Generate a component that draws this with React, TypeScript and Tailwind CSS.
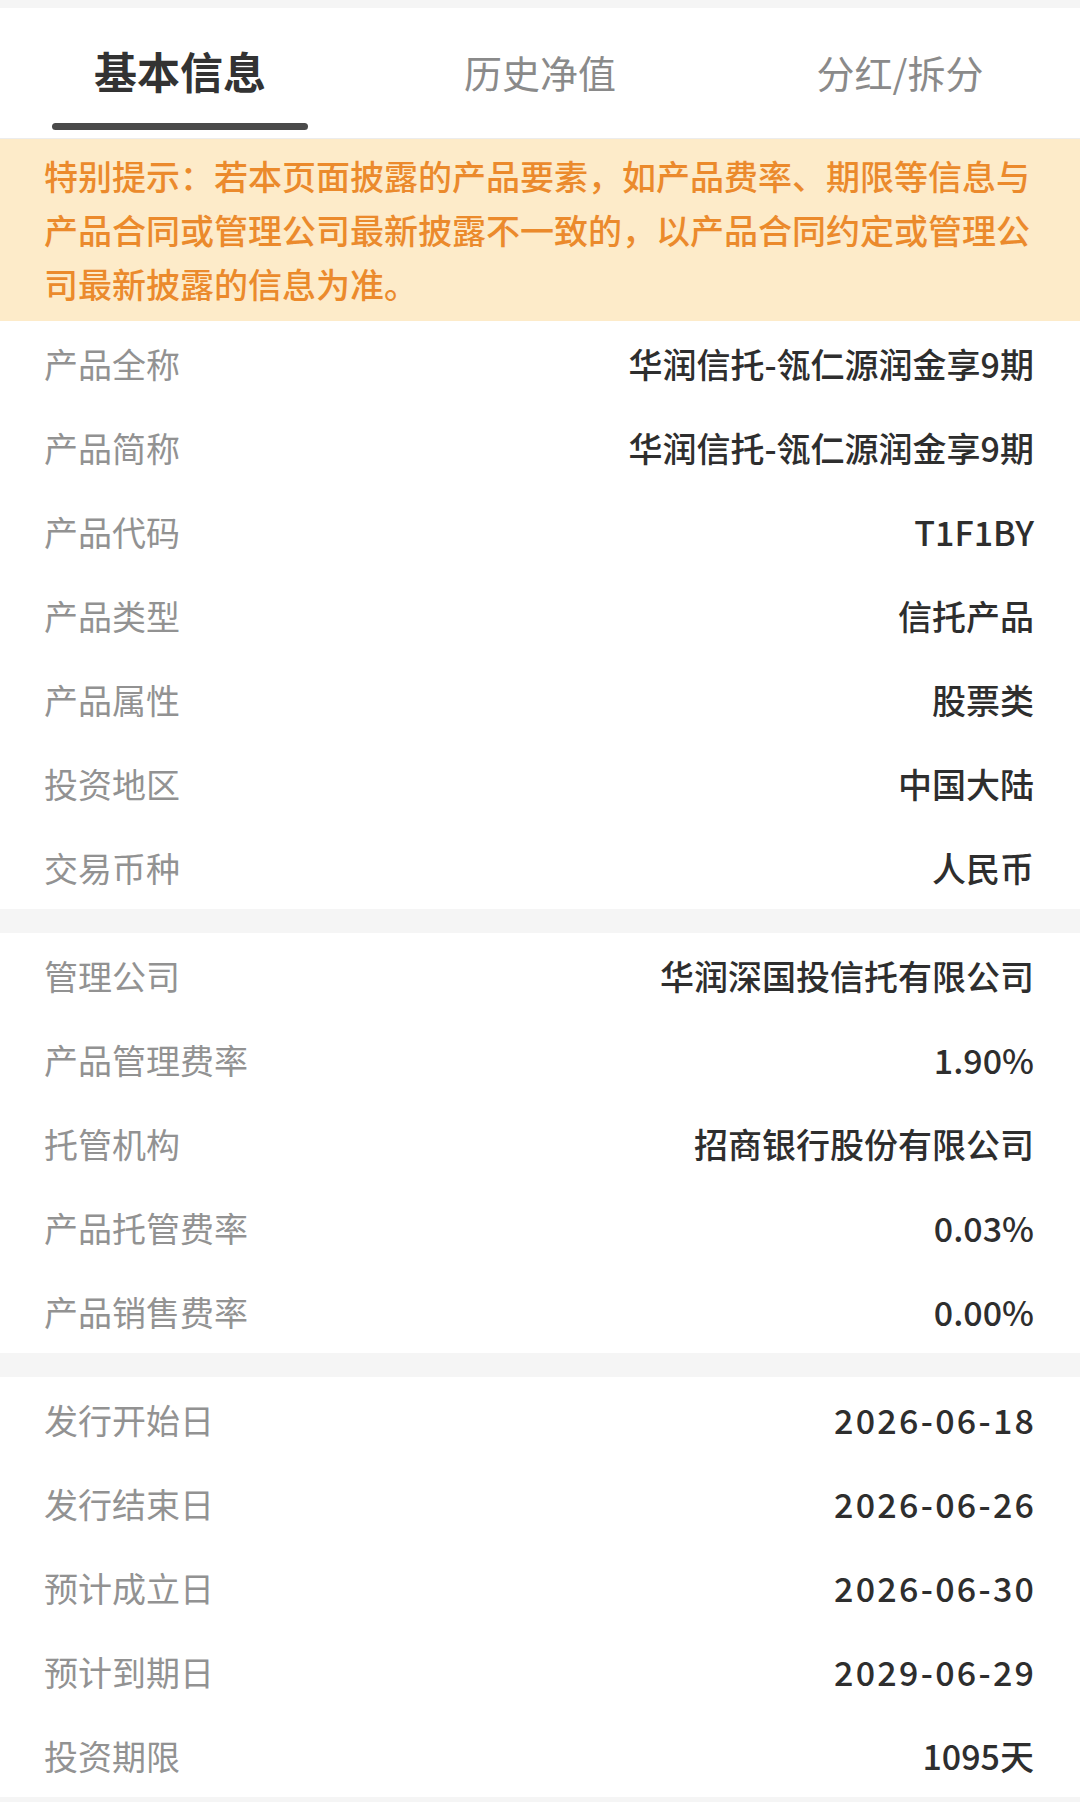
import React from "react";

const font = { fontFamily: '"Noto Sans CJK SC", "Noto Sans", sans-serif' };

type Row = [string, string];

const sec1: Row[] = [
  ["产品全称", "华润信托-瓴仁源润金享9期"],
  ["产品简称", "华润信托-瓴仁源润金享9期"],
  ["产品代码", "T1F1BY"],
  ["产品类型", "信托产品"],
  ["产品属性", "股票类"],
  ["投资地区", "中国大陆"],
  ["交易币种", "人民币"],
];
const sec2: Row[] = [
  ["管理公司", "华润深国投信托有限公司"],
  ["产品管理费率", "1.90%"],
  ["托管机构", "招商银行股份有限公司"],
  ["产品托管费率", "0.03%"],
  ["产品销售费率", "0.00%"],
];
const sec3: Row[] = [
  ["发行开始日", "2026-06-18"],
  ["发行结束日", "2026-06-26"],
  ["预计成立日", "2026-06-30"],
  ["预计到期日", "2029-06-29"],
  ["投资期限", "1095天"],
];

function Section({ rows }: { rows: Row[] }) {
  return (
    <div className="bg-white">
      {rows.map(([k, v], i) => {
        const isDate = /^\d{4}-\d{2}-\d{2}$/.test(v);
        return (
          <div key={i} className="flex h-[84px] items-center justify-between pl-[44px] pr-[46px]">
            <span className="text-[34px] text-[#929292]">{k}</span>
            <span
              className={
                isDate
                  ? "text-[34px] font-medium tracking-[2.3px] -mr-[2.3px] text-[#2e2e2e]"
                  : "text-[34px] font-medium text-[#2e2e2e]"
              }
            >
              {v}
            </span>
          </div>
        );
      })}
    </div>
  );
}

export default function App() {
  return (
    <div style={font} className="w-[1080px] min-h-[1802px] bg-[#f5f5f5]">
      <div className="h-[8px] bg-[#f5f5f5]" />
      <div className="flex h-[131px] bg-white border-b border-[#ececec]">
        <div className="relative flex flex-1 items-center justify-center pb-[6px]">
          <span className="text-[43px] font-bold text-[#333333]">基本信息</span>
          <div className="absolute bottom-[8px] left-1/2 h-[7px] w-[256px] -translate-x-1/2 rounded-full bg-[#4a4a4a]" />
        </div>
        <div className="flex flex-1 items-center justify-center pb-[4px]">
          <span className="text-[38px] text-[#8a8a8a]">历史净值</span>
        </div>
        <div className="flex flex-1 items-center justify-center pb-[4px]">
          <span className="text-[38px] text-[#8a8a8a]">分红/拆分</span>
        </div>
      </div>
      <div className="bg-[#fdebc9] pl-[44px] pr-[30px] py-[10px] text-[34px] font-medium leading-[54px] text-[#eb8a2c]">
        特别提示：若本页面披露的产品要素，如产品费率、期限等信息与产品合同或管理公司最新披露不一致的，以产品合同约定或管理公司最新披露的信息为准。
      </div>
      <Section rows={sec1} />
      <div className="h-[24px]" />
      <Section rows={sec2} />
      <div className="h-[24px]" />
      <Section rows={sec3} />
    </div>
  );
}
